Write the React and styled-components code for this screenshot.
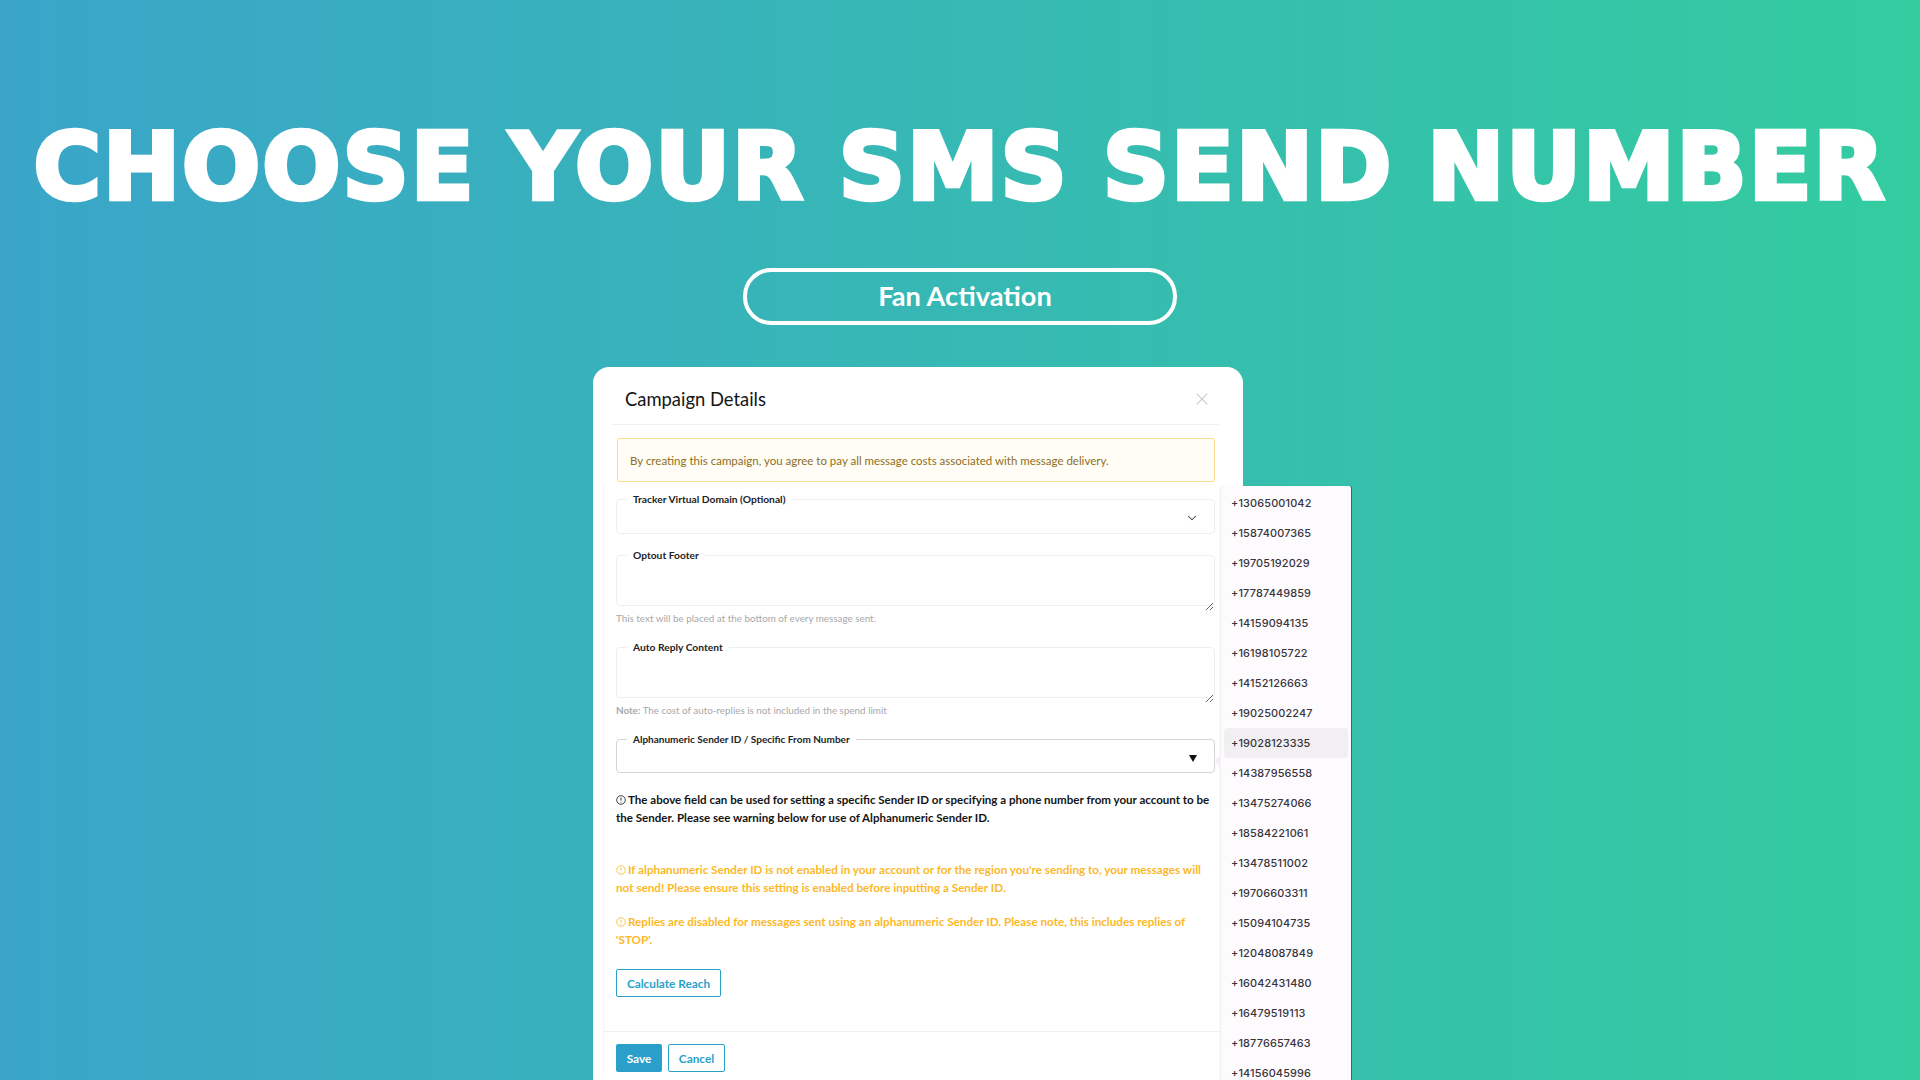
import React from 'react';
import styled, { createGlobalStyle } from 'styled-components';
import { X, ChevronDown } from 'lucide-react';

const Global = createGlobalStyle`
  html, body { margin: 0; padding: 0; height: 100%; }
  body { font-family: "Lato", "Liberation Sans", sans-serif; overflow: hidden; }
  * { box-sizing: border-box; }
`;

const Page = styled.div`
  width: 1920px; height: 1080px; overflow: hidden;
  display: flex; flex-direction: column; align-items: center;
  background: linear-gradient(90deg, #3aa5c9 0%, #33cc9f 100%);
`;
const Headline = styled.h1`
  margin: 110px 0 0; height: 115px; line-height: 115px;
  font-family: "DejaVu Sans", sans-serif; font-weight: 700; font-size: 92px;
  -webkit-text-stroke: 4.5px #fff;
  color: #fff; white-space: nowrap; text-align: center; letter-spacing: 2px;
`;
const Pill = styled.div`
  margin: 43px 0 0; width: 434px; height: 57px; border: 4px solid #fff; border-radius: 28px;
  display: flex; align-items: center; justify-content: center; padding: 0 0 2px 10px;
  font-family: "Lato", sans-serif; font-size: 27.2px; font-weight: 700; color: #fff;
`;
const Modal = styled.section`
  position: relative; align-self: flex-start; margin: 42px 0 0 593px; width: 650px; flex: 1;
  background: #fff; border-radius: 16px 16px 0 0; padding-top: 20px; min-height: 0;
`;
const Header = styled.header`
  display: flex; align-items: center; justify-content: space-between;
  margin: 0 24px 0 18px; padding: 0 7px 13px 14px; border-bottom: 1px solid #f0f0f0;
  height: 38px;
`;
const Title = styled.h2`
  margin: 0; font-size: 18.4px; line-height: 24px; font-weight: 400; color: #141414;
`;
const Notice = styled.div`
  margin: 13px 28px 0 24px; height: 44px; padding: 0 12px; display: flex; align-items: center;
  border: 1px solid #fddc90; border-radius: 3px; background: #fffdf6;
  color: #8d6f1d; font-size: 11.5px;
`;
const Sheet = styled.div`
  margin: 3px 0 0 10px; width: 618px; padding: 7px 6px 0 12px;
  border-left: 1px solid #f5f5f5;
`;
const Notch = styled.fieldset`
  margin: ${p => p.$top}px 0 0; padding: 0; height: ${p => p.$height}px; min-width: 0;
  border: 1px solid ${p => p.$strong ? '#d4d4d4' : '#eeeeee'}; border-radius: 4px;
  position: relative;
`;
const Legend = styled.legend`
  margin-left: 10px; padding: 0 6px; font-size: ${p => p.$size || 10.25}px; line-height: 14px; font-weight: 700; color: #222;
`;
const Input = styled.textarea`
  display: block; width: 100%; height: ${p => p.$height}px; border: 0; outline: 0;
  background: transparent; resize: vertical; padding: 0;
`;
const SelectRow = styled.div`
  display: flex; align-items: center; justify-content: flex-end; height: ${p => p.$height}px;
  padding-right: ${p => p.$pad}px; color: #444;
`;
const Arrow = styled.span`
  width: 0; height: 0; border-left: 4px solid transparent; border-right: 4px solid transparent;
  border-top: 7px solid #111;
`;
const Hint = styled.p`
  margin: ${p => p.$top}px 0 0; font-size: 9.85px; line-height: 14px; color: #a8a8a8;
  & > b { font-weight: 700; }
`;
const Para = styled.p`
  margin: ${p => p.$top}px 0 0; font-size: ${p => p.$size || 11.7}px; line-height: 17.5px; font-weight: 700;
  color: ${p => p.$warn ? '#fdb827' : '#141414'};
  & > svg { vertical-align: -1px; margin-right: 2px; }
`;
const GhostButton = styled.button`
  height: 28px; padding: 0; width: ${p => p.$width}px; margin-top: ${p => p.$top || 0}px; display: block;
  border: 1px solid #2a9fc9; border-radius: 2px; background: #fff; color: #2a9fc9;
  font: 700 11.8px "Lato", sans-serif;
`;
const Footer = styled.footer`
  margin: 34px -6px 0 -12px; padding: 12px 12px 0; border-top: 1px solid #f0f0f0;
  display: flex; gap: 6px;
`;
const SaveButton = styled.button`
  height: 28px; width: 46px; padding: 0; border: 0; border-radius: 2px; background: #2a9fc9; color: #fff;
  font: 700 11.8px "Lato", sans-serif;
`;
const Menu = styled.ul`
  position: absolute; left: 628px; top: 119px; width: 130px; height: 620px; margin: 0; padding: 1.5px 3px 0;
  list-style: none; background: #fefbff; border-radius: 2px 2px 0 0;
  box-shadow: -1px 0 2px rgba(0,0,0,.07), 1px 0 0 rgba(20,90,110,.75);
  &::before {
    content: ""; position: absolute; left: -7px; top: 270px; width: 7px; height: 14px;
    background: #f3f1f4; clip-path: polygon(100% 0, 100% 100%, 0 25%);
  }
`;
const Item = styled.li`
  height: 30px; display: flex; align-items: center; padding-left: 7px; border-radius: 4px;
  font: 500 10.9px "Inter", sans-serif; color: #37343a; letter-spacing: 0.15px;
  background: ${p => p.$active ? '#f1eff2' : 'transparent'};
`;

const InfoIcon = () => (
  <svg width="10" height="10" viewBox="0 0 10 10" fill="none" stroke="currentColor">
    <circle cx="5" cy="5" r="4.3" strokeWidth="0.8" />
    <path d="M5 2.6v3M5 6.8v.8" strokeWidth="0.9" />
  </svg>
);

const numbers = ['+13065001042','+15874007365','+19705192029','+17787449859','+14159094135','+16198105722','+14152126663','+19025002247','+19028123335','+14387956558','+13475274066','+18584221061','+13478511002','+19706603311','+15094104735','+12048087849','+16042431480','+16479519113','+18776657463','+14156045996'];

export default function App() {
  return (
    <Page>
      <Global />
      <Headline>CHOOSE YOUR SMS SEND NUMBER</Headline>
      <Pill>Fan Activation</Pill>
      <Modal>
        <Header>
          <Title>Campaign Details</Title>
          <X size={20} color="#cfcfcf" strokeWidth={1.3} />
        </Header>
        <Notice>By creating this campaign, you agree to pay all message costs associated with message delivery.</Notice>
        <Sheet>
          <Notch $top={0} $height={42}>
            <Legend>Tracker Virtual Domain (Optional)</Legend>
            <SelectRow $height={24} $pad={15}><ChevronDown size={14} strokeWidth={1.8} /></SelectRow>
          </Notch>
          <Notch $top={14} $height={58}>
            <Legend>Optout Footer</Legend>
            <Input $height={49} aria-label="Optout Footer" />
          </Notch>
          <Hint $top={5}>This text will be placed at the bottom of every message sent.</Hint>
          <Notch $top={15} $height={58}>
            <Legend>Auto Reply Content</Legend>
            <Input $height={49} aria-label="Auto Reply Content" />
          </Notch>
          <Hint $top={5}><b>Note:</b> The cost of auto-replies is not included in the spend limit</Hint>
          <Notch $top={15} $height={41} $strong>
            <Legend $size={10}>Alphanumeric Sender ID / Specific From Number</Legend>
            <SelectRow $height={25} $pad={17}><Arrow /></SelectRow>
          </Notch>
          <Para $top={18} $size={11.55}><InfoIcon />The above field can be used for setting a specific Sender ID or specifying a phone number from your account to be the Sender. Please see warning below for use of Alphanumeric Sender ID.</Para>
          <Para $top={35} $warn><InfoIcon />If alphanumeric Sender ID is not enabled in your account or for the region you're sending to, your messages will not send! Please ensure this setting is enabled before inputting a Sender ID.</Para>
          <Para $top={17} $warn><InfoIcon />Replies are disabled for messages sent using an alphanumeric Sender ID. Please note, this includes replies of 'STOP'.</Para>
          <GhostButton $width={105} $top={21}>Calculate Reach</GhostButton>
          <Footer>
            <SaveButton>Save</SaveButton>
            <GhostButton $width={57}>Cancel</GhostButton>
          </Footer>
        </Sheet>
        <Menu>
          {numbers.map((n, i) => <Item key={n} $active={i === 8}>{n}</Item>)}
        </Menu>
      </Modal>
    </Page>
  );
}
